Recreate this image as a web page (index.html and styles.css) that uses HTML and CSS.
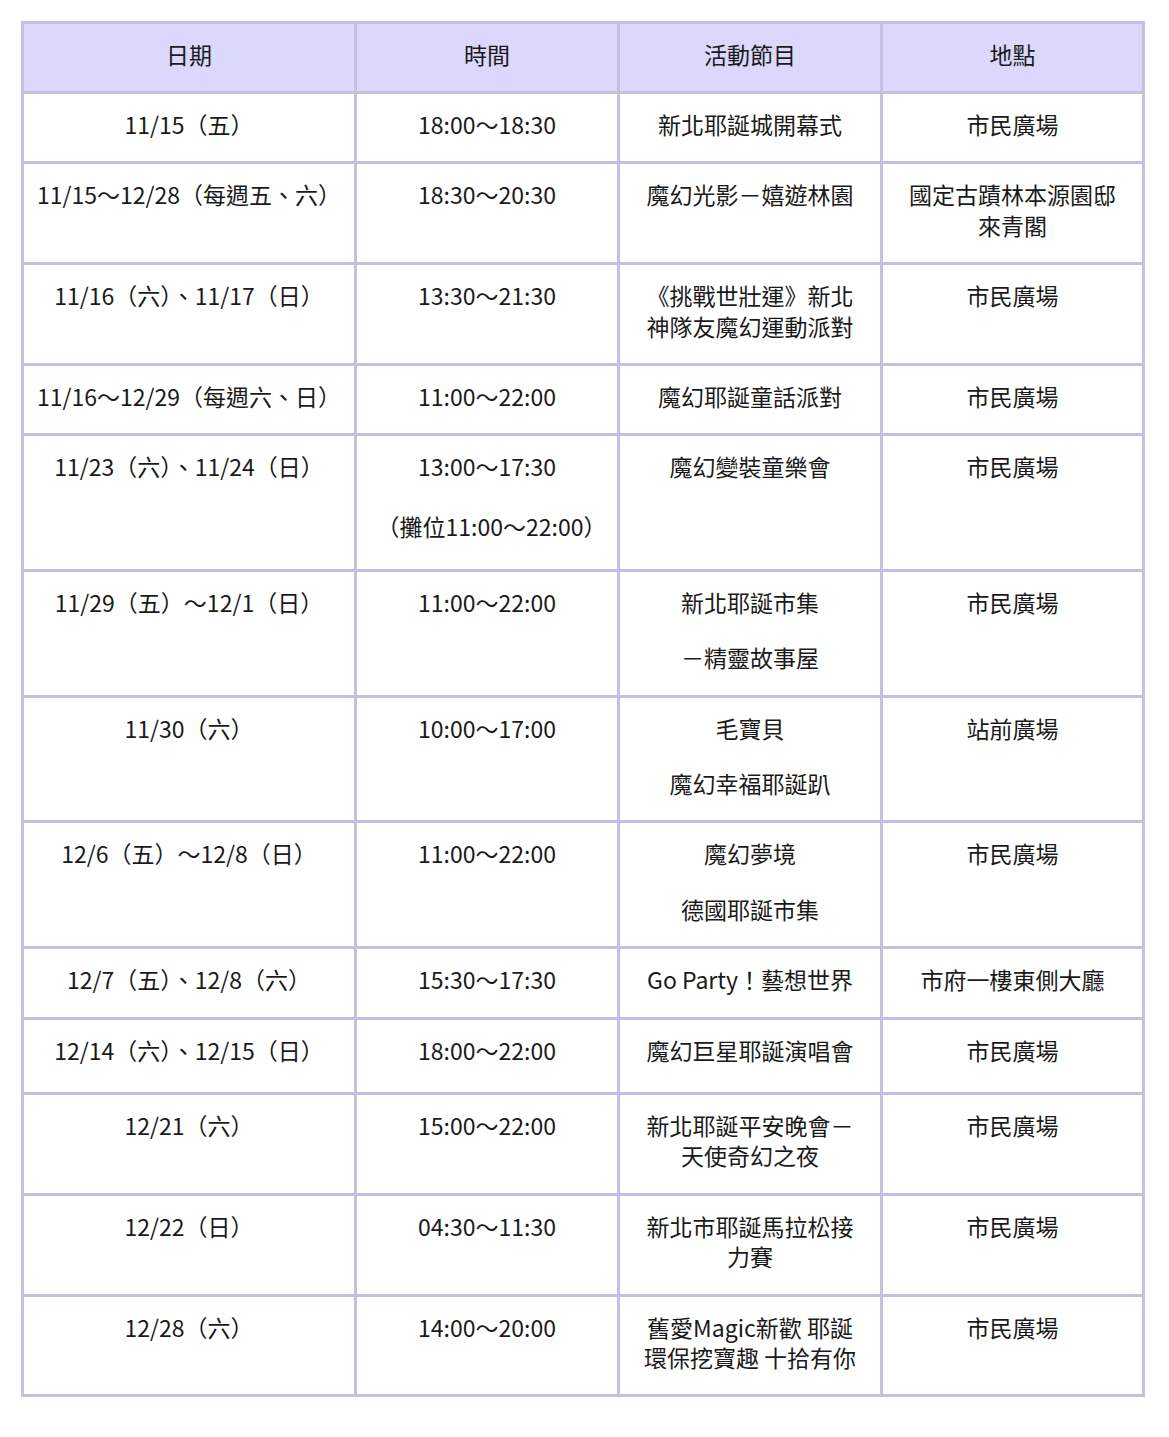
FILE: index.html
```html
<!DOCTYPE html>
<html lang="zh-Hant">
<head>
<meta charset="utf-8">
<title>新北耶誕城活動表</title>
<link rel="stylesheet" href="styles.css">
</head>
<body>
<div class="page">
<table class="schedule">
  <thead>
    <tr>
      <th class="c-date">日期</th>
      <th class="c-time">時間</th>
      <th class="c-event">活動節目</th>
      <th class="c-place">地點</th>
    </tr>
  </thead>
  <tbody>
    <tr>
      <td>11/15（五）</td>
      <td>18:00～18:30</td>
      <td>新北耶誕城開幕式</td>
      <td>市民廣場</td>
    </tr>
    <tr>
      <td>11/15～12/28（每週五、六）</td>
      <td>18:30～20:30</td>
      <td>魔幻光影－嬉遊林園</td>
      <td>國定古蹟林本源園邸來青閣</td>
    </tr>
    <tr>
      <td>11/16（六）、11/17（日）</td>
      <td>13:30～21:30</td>
      <td>《挑戰世壯運》新北神隊友魔幻運動派對</td>
      <td>市民廣場</td>
    </tr>
    <tr>
      <td>11/16～12/29（每週六、日）</td>
      <td>11:00～22:00</td>
      <td>魔幻耶誕童話派對</td>
      <td>市民廣場</td>
    </tr>
    <tr class="row-extra">
      <td>11/23（六）、11/24（日）</td>
      <td><p class="para">13:00～17:30</p><p class="para wide">（攤位11:00～22:00）</p></td>
      <td>魔幻變裝童樂會</td>
      <td>市民廣場</td>
    </tr>
    <tr>
      <td>11/29（五）～12/1（日）</td>
      <td>11:00～22:00</td>
      <td><p class="para">新北耶誕市集</p><p class="para">－精靈故事屋</p></td>
      <td>市民廣場</td>
    </tr>
    <tr>
      <td>11/30（六）</td>
      <td>10:00～17:00</td>
      <td><p class="para">毛寶貝</p><p class="para">魔幻幸福耶誕趴</p></td>
      <td>站前廣場</td>
    </tr>
    <tr>
      <td>12/6（五）～12/8（日）</td>
      <td>11:00～22:00</td>
      <td><p class="para">魔幻夢境</p><p class="para">德國耶誕市集</p></td>
      <td>市民廣場</td>
    </tr>
    <tr>
      <td>12/7（五）、12/8（六）</td>
      <td>15:30～17:30</td>
      <td>Go Party！藝想世界</td>
      <td>市府一樓東側大廳</td>
    </tr>
    <tr class="row-extra">
      <td>12/14（六）、12/15（日）</td>
      <td>18:00～22:00</td>
      <td>魔幻巨星耶誕演唱會</td>
      <td>市民廣場</td>
    </tr>
    <tr>
      <td>12/21（六）</td>
      <td>15:00～22:00</td>
      <td>新北耶誕平安晚會－天使奇幻之夜</td>
      <td>市民廣場</td>
    </tr>
    <tr>
      <td>12/22（日）</td>
      <td>04:30～11:30</td>
      <td>新北市耶誕馬拉松接力賽</td>
      <td>市民廣場</td>
    </tr>
    <tr>
      <td>12/28（六）</td>
      <td>14:00～20:00</td>
      <td>舊愛Magic新歡 耶誕環保挖寶趣 十拾有你</td>
      <td>市民廣場</td>
    </tr>
  </tbody>
</table>
</div>
</body>
</html>
```

FILE: styles.css
```css
html, body {
  margin: 0;
  padding: 0;
  background: #ffffff;
}

.page {
  padding: 21px 0 0 21px;
}

.schedule {
  width: 1124px;
  table-layout: fixed;
  border-collapse: separate;
  border-spacing: 0;
  border-left: 3px solid #c4c0de;
  border-top: 3px solid #c4c0de;
  font-family: "Noto Sans CJK TC", "Noto Sans", sans-serif;
  font-size: 23px;
  line-height: 30.7px;
  color: #1a1a1a;
}

.schedule th,
.schedule td {
  box-sizing: border-box;
  border-right: 3px solid #c4c0de;
  border-bottom: 3px solid #c4c0de;
  padding: 15px 19.5px 21.5px;
  text-align: center;
  vertical-align: top;
  font-weight: 400;
}

.schedule th:first-child,
.schedule td:first-child {
  padding-left: 8px;
  padding-right: 8px;
}

.schedule th {
  background: #dcd8fc;
}

.c-date { width: 333px; }
.c-time { width: 263px; }
.c-event { width: 263px; }
.c-place { width: 262px; }

.para {
  margin: 0;
}

.para + .para {
  margin-top: 25px;
}

.para + .para.wide {
  margin-top: 29.3px;
}

.row-extra > td {
  padding-bottom: 26.5px;
}
```
